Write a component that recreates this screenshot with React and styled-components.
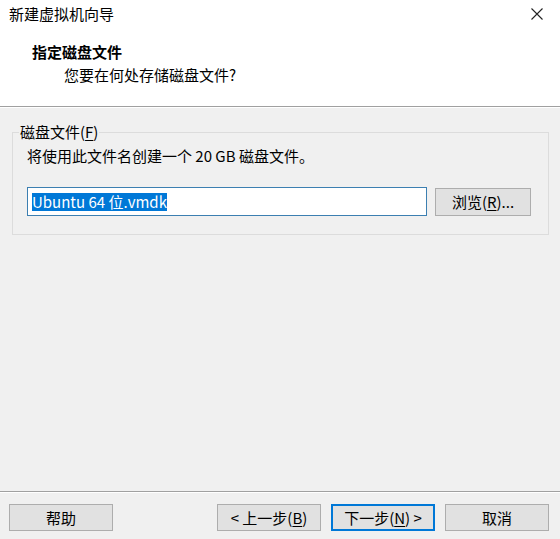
import React from "react";
import styled, { createGlobalStyle, css } from "styled-components";

const Global = createGlobalStyle`
  html, body { margin: 0; padding: 0; height: 100%; }
  body {
    font-family: "Noto Sans CJK SC", "Noto Sans", sans-serif;
    font-size: 15px;
    color: #000;
    background: #f0f0f0;
  }
  #root { height: 100%; }
`;

const Window = styled.div`
  height: 100vh;
  display: flex;
  flex-direction: column;
  background: #f0f0f0;
  overflow: hidden;
`;

const TitleBar = styled.div`
  height: 31px;
  flex: none;
  display: flex;
  align-items: center;
  justify-content: space-between;
  background: #fff;
  padding: 0 16px 0 9px;
  line-height: 20px;
`;

const Title = styled.span`
  font-size: 15px;
  margin-top: -4px;
`;

const CloseButton = styled.button`
  border: none;
  background: transparent;
  padding: 0;
  width: 14px;
  height: 14px;
  display: flex;
  align-items: center;
  justify-content: center;
  margin-top: -3px;
`;

const Header = styled.div`
  height: 75px;
  flex: none;
  background: #fff;
  padding: 11px 0 0 32px;
  box-sizing: border-box;
  display: flex;
  flex-direction: column;
  gap: 3px;
  line-height: 20px;
`;

const HeaderTitle = styled.div`
  font-weight: bold;
`;

const HeaderSub = styled.div`
  padding-left: 32px;
`;

const Etched = styled.div`
  flex: none;
  height: 1px;
  background: #a0a0a0;
  border-bottom: 1px solid #fff;
`;

const Body = styled.div`
  flex: 1;
  padding: 14px 11px 0 12px;
`;

const Group = styled.fieldset`
  margin: 0;
  border: 1px solid #dcdcdc;
  padding: 4px 17px 0 14px;
  height: 113px;
  box-sizing: border-box;
  min-width: 0;
`;

const Legend = styled.legend`
  padding: 0 1px;
  margin-left: -8px;
  line-height: 20px;
`;

const Info = styled.div`
  line-height: 20px;
`;

const Row = styled.div`
  display: flex;
  align-items: center;
  gap: 8px;
  margin-top: 21px;
`;

const TextInput = styled.div`
  flex: 1;
  height: 29px;
  box-sizing: border-box;
  border: 1px solid #3c7fb1;
  background: #fff;
  display: flex;
  align-items: center;
  padding-left: 4px;
`;

const Selected = styled.span`
  background: #0078d7;
  color: #fff;
  line-height: 18px;
`;

const Button = styled.button`
  font: inherit;
  font-size: 15px;
  line-height: 20px;
  width: ${(p) => p.$w || 104}px;
  height: ${(p) => p.$h || 27}px;
  box-sizing: border-box;
  padding: 0;
  background: #e1e1e1;
  color: #000;
  border: 1px solid #adadad;
  ${(p) =>
    p.$default &&
    css`
      border: 2px solid #0078d7;
    `}
`;

const Key = styled.u`
  text-underline-offset: 2px;
`;

const Footer = styled.div`
  flex: none;
  display: flex;
  align-items: center;
  padding: 11px 11px 8px 9px;
`;

const Spacer = styled.div`
  flex: 1;
`;

const NavGroup = styled.div`
  display: flex;
  gap: 10px;
`;

export default function App() {
  return (
    <>
      <Global />
      <Window>
        <TitleBar>
          <Title>新建虚拟机向导</Title>
          <CloseButton aria-label="关闭">
            <svg width="12" height="12" viewBox="0 0 12 12">
              <path d="M0.5 0.5 L11.5 11.5 M11.5 0.5 L0.5 11.5" stroke="#222" strokeWidth="1.1" fill="none" />
            </svg>
          </CloseButton>
        </TitleBar>
        <Header>
          <HeaderTitle>指定磁盘文件</HeaderTitle>
          <HeaderSub>您要在何处存储磁盘文件?</HeaderSub>
        </Header>
        <Etched />
        <Body>
          <Group>
            <Legend>
              磁盘文件(<Key>F</Key>)
            </Legend>
            <Info>将使用此文件名创建一个 20 GB 磁盘文件。</Info>
            <Row>
              <TextInput>
                <Selected>Ubuntu 64 位.vmdk</Selected>
              </TextInput>
              <Button $w={96} $h={28}>
                浏览(<Key>R</Key>)...
              </Button>
            </Row>
          </Group>
        </Body>
        <Etched />
        <Footer>
          <Button>帮助</Button>
          <Spacer />
          <NavGroup>
            <Button>
              &lt; 上一步(<Key>B</Key>)
            </Button>
            <Button $default>
              下一步(<Key>N</Key>) &gt;
            </Button>
            <Button>取消</Button>
          </NavGroup>
        </Footer>
      </Window>
    </>
  );
}
